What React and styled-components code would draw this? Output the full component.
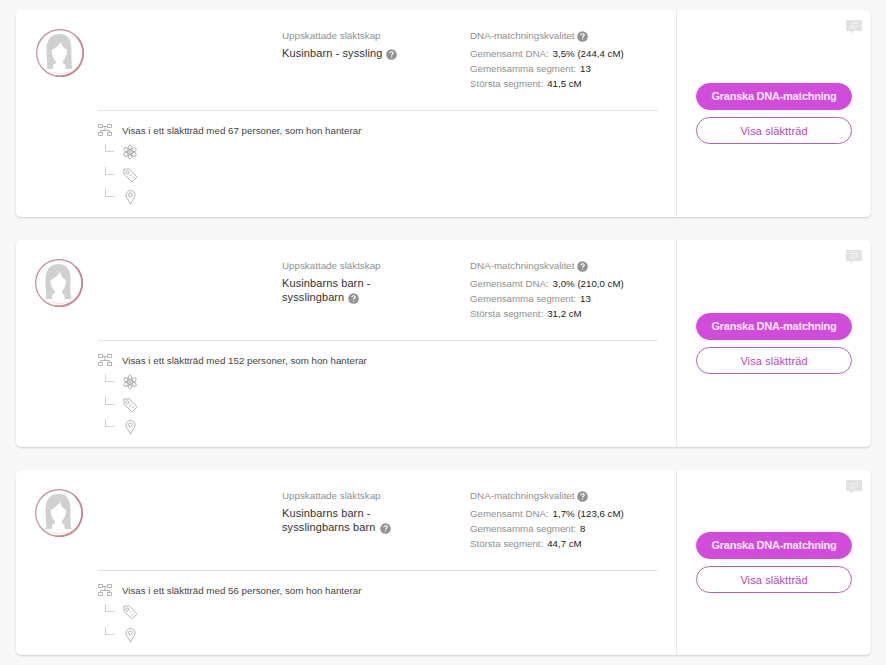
import React from "react";
import styled, { createGlobalStyle } from "styled-components";

const GlobalStyle = createGlobalStyle`
  * { box-sizing: border-box; }
  body { margin: 0; background: #f7f7f7; font-family: "Liberation Sans", Arial, sans-serif; }
`;

const Page = styled.main`
  display: flex;
  flex-direction: column;
  gap: 23px;
  height: 665px;
  padding: 10px 15px 0 16px;
  overflow: hidden;
  background: #f7f7f7;
`;

const Card = styled.article`
  position: relative;
  display: flex;
  flex: none;
  height: ${(p) => p.$height}px;
  background: #fff;
  border-radius: 5px;
  box-shadow: 0 1px 2px rgba(0, 0, 0, 0.17);
`;

const Main = styled.div`
  display: flex;
  width: 660px;
  padding: 18px 18px 0 ${(p) => p.$inset}px;
`;

const AvatarSvg = styled.svg`
  flex: none;
  width: 48px;
  height: 48px;
  margin-top: 1px;
  margin-right: ${(p) => p.$gap}px;
`;

const Details = styled.div`
  display: flex;
  flex-direction: column;
  width: 560px;
`;

const Summary = styled.div`
  display: flex;
  height: 83px;
  padding-left: 184px;
  border-bottom: 1px solid #e2e2e2;
`;

const Column = styled.section`
  width: ${(p) => p.$width}px;
`;

const Label = styled.div`
  display: flex;
  align-items: center;
  height: 14px;
  font-size: 9.8px;
  color: #8f8f8f;
  white-space: nowrap;

  svg {
    margin-top: 2px;
  }
`;

const Relationship = styled.div`
  margin-top: 4px;
  font-size: 11px;
  line-height: 14px;
  letter-spacing: 0.1px;
  color: #333;
  white-space: nowrap;
`;

const HelpSvg = styled.svg`
  width: 11px;
  height: 11px;
  margin-left: ${(p) => p.$gap}px;
  vertical-align: -3px;
`;

const Stats = styled.dl`
  margin: 4px 0 0;
`;

const Stat = styled.div`
  display: flex;
  gap: 4px;
  height: 15px;
  font-size: 9.7px;
  line-height: 15px;
  white-space: nowrap;
`;

const StatName = styled.dt`
  color: #8f8f8f;
`;

const StatValue = styled.dd`
  margin: 0;
  color: #222;
`;

const TreeRow = styled.div`
  display: flex;
  align-items: center;
  gap: 9px;
  height: 16px;
  margin-top: 11px;
  font-size: 9.75px;
  color: #444;
  white-space: nowrap;
`;

const TreeSvg = styled.svg`
  width: 15px;
  height: 14px;
`;

const Branches = styled.ul`
  list-style: none;
  margin: 3px 0 0;
  padding: 0 0 0 7px;
`;

const Branch = styled.li`
  display: flex;
  align-items: center;
  gap: 8px;
  height: 22.5px;
`;

const Elbow = styled.span`
  width: 9px;
  height: 8px;
  margin-top: -8px;
  border-left: 1px solid #cfcfcf;
  border-bottom: 1px solid #cfcfcf;
`;

const BranchSvg = styled.svg`
  width: 16px;
  height: 16px;
`;

const Actions = styled.aside`
  display: flex;
  flex-direction: column;
  justify-content: center;
  gap: 7px;
  width: 195px;
  padding: 0 19px;
  border-left: 1px solid #e9e9e9;
`;

const Button = styled.button`
  height: 27px;
  padding: ${(p) => (p.$primary ? "0 0 1px" : "0")};
  border: 1px solid ${(p) => (p.$primary ? "#d24cdc" : "#b762b9")};
  border-radius: 14px;
  background: ${(p) => (p.$primary ? "#d24cdc" : "#fff")};
  color: ${(p) => (p.$primary ? "#ffe9ff" : "#b34bb8")};
  font-family: inherit;
  font-size: 11px;
  font-weight: ${(p) => (p.$primary ? 700 : 400)};
  letter-spacing: ${(p) => (p.$primary ? -0.25 : 0.1)}px;
`;

const CommentSvg = styled.svg`
  position: absolute;
  top: 10px;
  right: 9px;
  width: 16px;
  height: 14px;
`;

function Avatar({ gap }) {
  return (
    <AvatarSvg $gap={gap} viewBox="0 0 48 48">
      <circle cx="24" cy="24" r="23.3" fill="#fff" stroke="#c48c93" strokeWidth="1.2" />
      <path d="M40.400 7.600A23.300 23.300 0 0 1 20 47" fill="none" stroke="#c98790" strokeWidth="1.7" />
      <path d="M11 40C12 35 10 27 10.500 18C12 8 17 5 23 5C32 5 35.500 11 35.500 20C35.500 28 35 34 36.500 40H11Z" fill="#d0d0d0" />
      <path d="M15.500 21C19 20 23 16 25 13C26 17 28 19.500 31 21C31 27 28.500 31 26 32.500C24 33.500 22 33.500 20.500 32.500C17.500 30.500 15.500 26 15.500 21Z" fill="#fff" />
      <path d="M20 31H27V34L29.500 36V42H17V36L20 34Z" fill="#fff" />
      <path d="M13 43Q24 46 35 43" fill="none" stroke="#efe3e4" strokeWidth="1" />
    </AvatarSvg>
  );
}

function Help({ gap = 4 }) {
  return (
    <HelpSvg $gap={gap} viewBox="0 0 11 11">
      <circle cx="5.500" cy="5.500" r="5.300" fill="#929292" />
      <path d="M3.900 4.300C3.900 2.300 7.200 2.300 7.200 4.100C7.200 5.200 5.600 5.200 5.600 6.500M5.600 7.500V8.600" fill="none" stroke="#fff" strokeWidth="1.200" />
    </HelpSvg>
  );
}

function TreeIcon() {
  return (
    <TreeSvg viewBox="0 0 15 14" fill="none" stroke="#b3b3b3" strokeWidth="1">
      <path d="M.5 1.500H4.500V4.500H.5ZM9.500 1.500H13.500V4.500H9.500ZM.5 9.500H4.500V12.500H.5ZM9.500 9.500H13.500V12.500H9.500ZM4.500 3.500H9.500M7 3.500V7M2.500 9.500V7.500H11.500V9.500" />
    </TreeSvg>
  );
}

function BranchIcon({ kind }) {
  return (
    <BranchSvg viewBox="0 0 16 16" fill="none" stroke="#a9a9a9" strokeWidth=".9">
      {kind === "atom" && (
        <>
          <ellipse cx="8" cy="8" rx="2.300" ry="7" />
          <ellipse cx="8" cy="8" rx="2.300" ry="7" transform="rotate(60 8 8)" />
          <ellipse cx="8" cy="8" rx="2.300" ry="7" transform="rotate(-60 8 8)" />
          <circle cx="8" cy="8" r="1" />
        </>
      )}
      {kind === "tag" && (
        <>
          <path d="M1.700 2.200L7.300 2L14.500 9.200Q15 10 14.500 10.500L10.700 14.200Q10 14.700 9.300 14.200L2.200 7.500Z" />
          <circle cx="5.300" cy="5.500" r="1.500" />
          <path d="M7.700 9.300L9.700 7.300M10 11.300L12 9.300" />
        </>
      )}
      {kind === "pin" && (
        <>
          <path d="M8.500 15C7 11.500 4 8.800 4 6A4.500 4.500 0 0 1 13 6C13 8.800 10 11.500 8.500 15Z" />
          <circle cx="8.500" cy="5.800" r="1.900" />
        </>
      )}
    </BranchSvg>
  );
}

function CommentIcon() {
  return (
    <CommentSvg viewBox="0 0 16 14">
      <path d="M0 0H16V11H7L5 13.500L4 11H0Z" fill="#e2e2e2" />
      <path d="M4 3.500H12M4 6H9M10 6H12M4 8H10" stroke="#f4f4f4" strokeWidth="1" />
    </CommentSvg>
  );
}

const matches = [
  {
    height: 207, inset: 20, relation: ["Kusinbarn - syssling"], shared: "3,5% (244,4 cM)",
    segments: "13", largest: "41,5 cM", people: 67, branches: ["atom", "tag", "pin"],
  },
  {
    height: 207, inset: 19, relation: ["Kusinbarns barn -", "sysslingbarn"], shared: "3,0% (210,0 cM)",
    segments: "13", largest: "31,2 cM", people: 152, branches: ["atom", "tag", "pin"],
  },
  {
    height: 185, inset: 19, relation: ["Kusinbarns barn -", "sysslingbarns barn"], shared: "1,7% (123,6 cM)",
    segments: "8", largest: "44,7 cM", people: 56, branches: ["tag", "pin"],
  },
];

function MatchCard({ match }) {
  const lastLine = match.relation.length - 1;
  return (
    <Card $height={match.height}>
      <Main $inset={match.inset}>
        <Avatar gap={34 - match.inset} />
        <Details>
          <Summary>
            <Column $width={188}>
              <Label>Uppskattade släktskap</Label>
              <Relationship>
                {match.relation.map((line, i) => (
                  <div key={line}>{line}{i === lastLine && <Help />}</div>
                ))}
              </Relationship>
            </Column>
            <Column $width={188}>
              <Label>DNA-matchningskvalitet<Help gap={2} /></Label>
              <Stats>
                <Stat><StatName>Gemensamt DNA:</StatName><StatValue>{match.shared}</StatValue></Stat>
                <Stat><StatName>Gemensamma segment:</StatName><StatValue>{match.segments}</StatValue></Stat>
                <Stat><StatName>Största segment:</StatName><StatValue>{match.largest}</StatValue></Stat>
              </Stats>
            </Column>
          </Summary>
          <TreeRow><TreeIcon />Visas i ett släktträd med {match.people} personer, som hon hanterar</TreeRow>
          <Branches>
            {match.branches.map((kind) => (
              <Branch key={kind}><Elbow /><BranchIcon kind={kind} /></Branch>
            ))}
          </Branches>
        </Details>
      </Main>
      <Actions>
        <Button $primary>Granska DNA-matchning</Button>
        <Button>Visa släktträd</Button>
      </Actions>
      <CommentIcon />
    </Card>
  );
}

export default function App() {
  return (
    <>
      <GlobalStyle />
      <Page>
        {matches.map((match) => <MatchCard key={match.people} match={match} />)}
      </Page>
    </>
  );
}
